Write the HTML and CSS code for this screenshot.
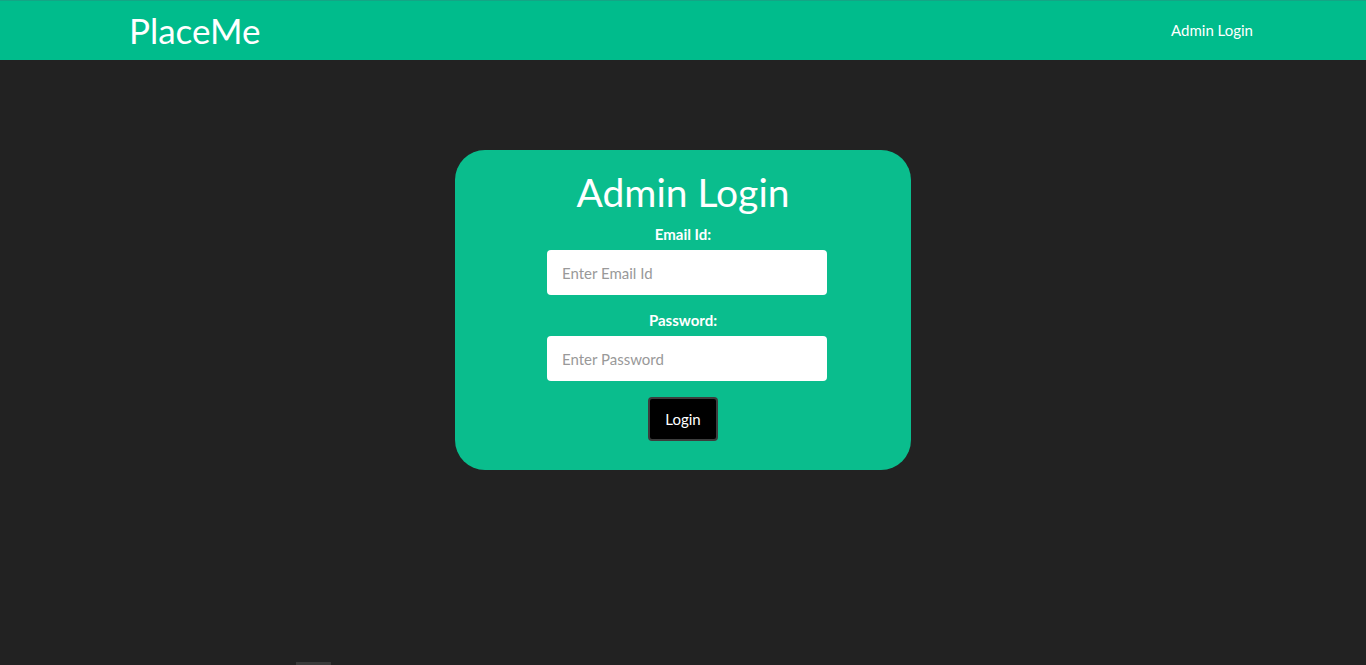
FILE: index.html
```html
<!DOCTYPE html>
<html>
<head>
<meta charset="utf-8">
<title>PlaceMe - Admin Login</title>
<link rel="stylesheet" href="styles.css">
</head>
<body>
<nav class="navbar">
  <div class="nav-inner">
    <a class="brand" href="#">PlaceMe</a>
    <a class="nav-link" href="#">Admin Login</a>
  </div>
</nav>
<main class="main">
  <form class="card">
    <h1 class="title">Admin Login</h1>
    <label class="label" for="email">Email Id:</label>
    <input class="input" id="email" type="email" placeholder="Enter Email Id">
    <label class="label" for="pwd">Password:</label>
    <input class="input" id="pwd" type="password" placeholder="Enter Password">
    <button class="btn" type="button">Login</button>
  </form>
</main>
<div class="stub"></div>
</body>
</html>
```
FILE: styles.css
```css
* { box-sizing: border-box; }
html, body { margin: 0; padding: 0; }
body {
  background: #222222;
  font-family: Lato, "Open Sans", sans-serif;
  color: #fff;
  height: 665px;
  overflow: hidden;
  position: relative;
}
.navbar {
  background: #00bc8c;
  height: 60px;
  border-top: 1px solid #14a585;
}
.nav-inner {
  width: 1170px;
  margin: 0 auto;
  padding: 0 15px 0 31px;
  height: 59px;
  display: flex;
  align-items: center;
  justify-content: space-between;
}
.brand {
  color: #fff;
  text-decoration: none;
  font-size: 35px;
  line-height: 1;
  margin-top: -1px;
}
.nav-link {
  color: #fff;
  text-decoration: none;
  font-size: 15px;
  margin-top: -2px;
}
.main {
  display: flex;
  justify-content: center;
  padding-top: 90px;
}
.card {
  width: 456px;
  height: 320px;
  background: #0abd8d;
  border-radius: 30px;
  display: flex;
  flex-direction: column;
  align-items: center;
  padding-top: 19px;
}
.title {
  margin: 0;
  font-weight: 400;
  font-size: 39px;
  line-height: 46px;
}
.label {
  font-weight: 700;
  font-size: 15px;
  margin-top: 10px;
  margin-bottom: 7px;
  line-height: 18px;
}
.input + .label { margin-top: 16px; }
.input {
  width: 280px;
  height: 45px;
  margin-left: 8px;
  border: none;
  border-radius: 4px;
  background: #fff;
  padding: 0 15px;
  font-family: Lato, sans-serif;
  font-size: 15px;
  color: #333;
}
.input::placeholder { color: #999; }
.btn {
  margin-top: 16px;
  width: 70px;
  height: 44px;
  background: #000;
  color: #fff;
  border: 2px solid #3d3d3d;
  border-radius: 4px;
  font-family: Lato, sans-serif;
  font-size: 15px;
}
.stub {
  position: absolute;
  left: 296px;
  bottom: 0;
  width: 35px;
  height: 3px;
  background: #3a3a3a;
}
```
